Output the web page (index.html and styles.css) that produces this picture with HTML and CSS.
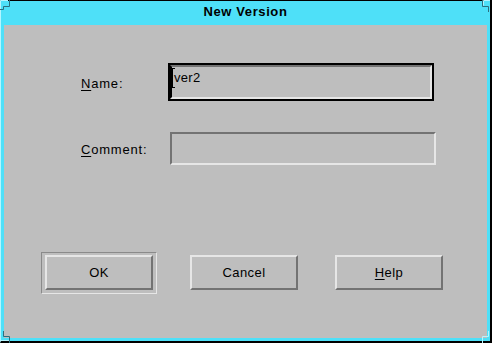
FILE: index.html
```html
<!DOCTYPE html>
<html>
<head>
<meta charset="utf-8">
<title>New Version</title>
<link rel="stylesheet" href="styles.css">
</head>
<body>
<div class="window">
  <svg class="corner tl" width="12" height="12" viewBox="0 0 12 12"><polyline points="0,9.5 3.5,9.5 3.5,6.5 9.5,6.5 9.5,0" fill="none" stroke="#2b6f7e" stroke-width="1"/><polyline points="0.5,8 0.5,0.5 8,0.5" fill="none" stroke="#b4f5ff" stroke-width="1"/></svg>
  <svg class="corner tr" width="12" height="12" viewBox="0 0 12 12"><polyline points="2.5,0 2.5,6.5 8.5,6.5 8.5,12" fill="none" stroke="#2b6f7e" stroke-width="1"/><polyline points="3.5,5.5 3.5,0.5 10,0.5" fill="none" stroke="#b4f5ff" stroke-width="1"/></svg>
  <svg class="corner bl" width="12" height="12" viewBox="0 0 12 12"><polyline points="0.5,0 0.5,9.5 9,9.5" fill="none" stroke="#b4f5ff" stroke-width="1"/><polyline points="3.5,0 3.5,5.5 9.5,5.5 9.5,12" fill="none" stroke="#2b6f7e" stroke-width="1"/></svg>
  <svg class="corner br" width="12" height="12" viewBox="0 0 12 12"><polyline points="8.5,0 8.5,5.5 2.5,5.5 2.5,12" fill="none" stroke="#b4f5ff" stroke-width="1"/></svg>
  <div class="titlebar">New Version</div>
  <div class="client">
    <div class="form">
      <label class="label"><span class="mn">N</span>ame:</label>
      <div class="field field-name"><span class="caret"></span>ver2</div>
      <label class="label"><span class="mn">C</span>omment:</label>
      <div class="field field-comment"></div>
    </div>
    <div class="buttons">
      <div class="default-ring"><div class="btn">OK</div></div>
      <div class="btn">Cancel</div>
      <div class="btn"><span class="mn">H</span>elp</div>
    </div>
  </div>
</div>
</body>
</html>
```
FILE: styles.css
```css
html, body {
  margin: 0;
  padding: 0;
  background: #000;
}
body {
  width: 492px;
  height: 343px;
  overflow: hidden;
  font-family: "Liberation Sans", Arial, sans-serif;
}
.window {
  position: relative;
  box-sizing: border-box;
  width: 492px;
  height: 343px;
  background: #4ee0f8;
  border-left: 1px solid #b4f5ff;
  border-top: 1px solid #000;
  border-right: 2px solid #000;
  border-bottom: 2px solid #000;
  padding: 0 3px 3px 3px;
  display: flex;
  flex-direction: column;
}
.corner {
  position: absolute;
}
.corner.tl { left: -1px; top: -1px; }
.corner.tr { right: -2px; top: -1px; }
.corner.bl { left: -1px; bottom: -2px; }
.corner.br { right: -2px; bottom: -2px; }
.titlebar {
  height: 24px;
  box-sizing: border-box;
  padding-bottom: 3px;
  line-height: 21px;
  text-align: center;
  font-weight: bold;
  font-size: 13px;
  letter-spacing: 0.6px;
  color: #000;
}
.client {
  flex: 1;
  background: #bebebe;
  padding-top: 40px;
  display: flex;
  flex-direction: column;
}
.form {
  display: grid;
  grid-template-columns: 89px auto;
  row-gap: 33px;
  align-items: center;
  padding-left: 77px;
}
.label {
  font-size: 13px;
  letter-spacing: 0.8px;
  color: #000;
  line-height: 15px;
  padding-top: 2px;
}
.mn {
  text-decoration: underline;
  text-underline-offset: 2px;
}
.field {
  box-sizing: border-box;
  background: #bebebe;
  border-style: solid;
  border-width: 2px;
  border-color: #737373 #e6e6e6 #e6e6e6 #737373;
}
.field-name {
  width: 262px;
  height: 34px;
  outline: 2px solid #000;
  border-left-color: #000;
  padding-top: 1px;
  font-size: 13px;
  letter-spacing: 0.3px;
  line-height: 20px;
  color: #000;
  display: flex;
  align-items: flex-start;
}
.caret {
  display: inline-block;
  box-sizing: border-box;
  width: 4px;
  height: 20px;
  margin-left: -1px;
  margin-right: -1px;
  border-top: 1px solid #000;
  border-bottom: 1px solid #000;
  background: linear-gradient(#000, #000) left top / 2px 100% no-repeat;
}
.field-comment {
  width: 266px;
  height: 33px;
}
.buttons {
  margin-top: 90px;
  padding-left: 41px;
  display: flex;
  gap: 37px;
}
.default-ring {
  margin: -3px -4px -4px -4px;
  padding: 2px 3px 3px 3px;
  border-style: solid;
  border-width: 1px;
  border-color: #8a8a8a #e6e6e6 #e6e6e6 #8a8a8a;
  display: flex;
}
.btn {
  box-sizing: border-box;
  width: 108px;
  height: 35px;
  border-style: solid;
  border-width: 2px;
  border-color: #e6e6e6 #737373 #737373 #e6e6e6;
  font-size: 13px;
  letter-spacing: 0.4px;
  color: #000;
  display: flex;
  align-items: center;
  justify-content: center;
  padding-bottom: 1px;
}
```
